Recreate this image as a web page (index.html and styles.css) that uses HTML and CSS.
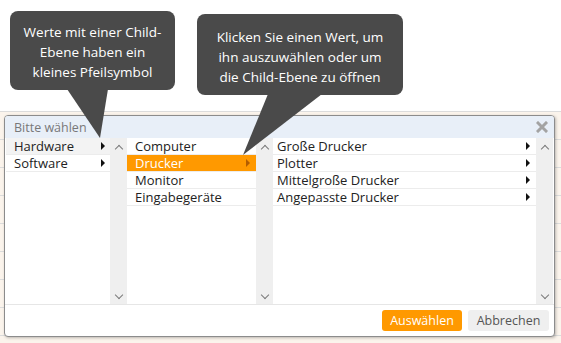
FILE: index.html
```html
<!DOCTYPE html>
<html>
<head>
<meta charset="UTF-8">
<link rel="stylesheet" href="styles.css">
</head>
<body>
<div class="page">
    <div class="top"></div>
    <div class="backdrop">
        <div class="dialog">
            <div class="dialog-head">
                <span class="dialog-title">Bitte wählen</span>
                <svg class="close" width="12" height="12" viewBox="0 0 12 12">
                    <path d="M2 2 L10 10 M10 2 L2 10" stroke="#a3a3a3" stroke-width="3" stroke-linecap="square"/>
                </svg>
            </div>
            <div class="dialog-body">
                <div class="list col1">
                    <div class="item hover">Hardware<span class="tri"></span></div>
                    <div class="item">Software<span class="tri"></span></div>
                </div>
                <div class="scroll"><span class="chev up"></span><span class="chev down"></span></div>
                <div class="list col2">
                    <div class="item">Computer</div>
                    <div class="item selected">Drucker<span class="tri"></span></div>
                    <div class="item">Monitor</div>
                    <div class="item">Eingabegeräte</div>
                </div>
                <div class="scroll"><span class="chev up"></span><span class="chev down"></span></div>
                <div class="list col3">
                    <div class="item">Große Drucker<span class="tri"></span></div>
                    <div class="item">Plotter<span class="tri"></span></div>
                    <div class="item">Mittelgroße Drucker<span class="tri"></span></div>
                    <div class="item">Angepasste Drucker<span class="tri"></span></div>
                </div>
                <div class="scroll"><span class="chev up"></span><span class="chev down"></span></div>
            </div>
            <div class="dialog-foot">
                <button class="btn primary">Auswählen</button>
                <button class="btn">Abbrechen</button>
            </div>
        </div>
    </div>

    <!-- hint bubbles over the dialog -->
    <svg class="pointers" width="561" height="343">
        <polygon points="67,89 108,89 100,138" fill="#4a4a4a"/>
        <polygon points="268,94 322,94 243,155" fill="#4a4a4a"/>
    </svg>
    <div class="tip tip-one">Werte mit einer Child-<br>Ebene haben ein<br>kleines Pfeilsymbol</div>
    <div class="tip tip-two">Klicken Sie einen Wert, um<br>ihn auszuwählen oder um<br>die Child-Ebene zu öffnen</div>
</div>
</body>
</html>
```

FILE: styles.css
```css
body {
    margin: 0;
    font-family: 'Open Sans', 'Liberation Sans', sans-serif;
    font-size: 13px;
    color: #222;
    background: #fff;
}

.page {
    position: relative;
    width: 561px;
    height: 343px;
    display: flex;
    flex-direction: column;
    overflow: hidden;
}

.top {
    height: 111px;
    flex: 0 0 111px;
}

.backdrop {
    flex: 1;
    border-top: 1px solid #dcdcdc;
    background-color: #fbf4ec;
    background-image: repeating-linear-gradient(to bottom, transparent 0, transparent 27px, #dcdcdc 27px, #dcdcdc 28px);
    padding: 3px 0 0 4px;
}

.dialog {
    width: 549px;
    height: 220px;
    background: #fff;
    border: 1px solid #8c8c8c;
    border-radius: 4px;
    box-shadow: 1px 1px 3px rgba(0, 0, 0, 0.25);
    display: flex;
    flex-direction: column;
    overflow: hidden;
}

.dialog-head {
    height: 22px;
    flex: 0 0 22px;
    background: #e8eff8;
    display: flex;
    align-items: center;
    justify-content: space-between;
    padding: 0 6px 0 9px;
}

.dialog-title {
    color: #787878;
    font-size: 12.5px;
}

.close {
    margin-top: -1px;
}

.dialog-body {
    height: 166px;
    flex: 0 0 166px;
    display: flex;
    padding: 0 1px;
    border-bottom: 1px solid #e6e6e6;
}

.list {
    background: #fff;
}
.col1 { width: 104px; }
.col2 { width: 129px; }
.col3 { width: 263px; }

.item {
    height: 16px;
    line-height: 16px;
    border-bottom: 1px solid #ececec;
    padding-left: 8px;
    display: flex;
    align-items: center;
    justify-content: space-between;
    padding-right: 5px;
    white-space: nowrap;
}
.col2 .item { padding-right: 6px; }
.col3 .item { padding-left: 4px; padding-right: 6px; }

.item.hover {
    background: #f3f3f3;
}

.item.selected {
    background: #ff9900;
    color: #fff;
}

.tri {
    width: 0;
    height: 0;
    border-top: 4px solid transparent;
    border-bottom: 4px solid transparent;
    border-left: 4px solid #111;
}
.item.selected .tri {
    border-left-color: #b35d00;
}

.scroll {
    width: 17px;
    flex: 0 0 17px;
    background: #efefef;
    display: flex;
    flex-direction: column;
    justify-content: space-between;
    align-items: center;
    padding: 6px 0 4px;
    box-sizing: border-box;
}

.chev {
    width: 5px;
    height: 5px;
    border-left: 1.5px solid #7a7a7a;
    border-top: 1.5px solid #7a7a7a;
}
.chev.up {
    transform: rotate(45deg);
    margin-top: 2px;
}
.chev.down {
    transform: rotate(225deg);
    margin-bottom: 2px;
}

.dialog-foot {
    flex: 1;
    display: flex;
    justify-content: flex-end;
    align-items: center;
    gap: 6px;
    padding-right: 5px;
}

.btn {
    font-family: inherit;
    font-size: 12.5px;
    height: 21px;
    border: none;
    border-radius: 3px;
    background: #efefef;
    color: #555;
    width: 81px;
    padding: 0;
    margin-top: -1px;
}
.btn.primary {
    background: #ff9900;
    color: #fff;
    width: 80px;
}

.pointers {
    position: absolute;
    left: 0;
    top: 0;
    pointer-events: none;
}

.tip {
    position: absolute;
    background: #4a4a4a;
    color: #fff;
    border-radius: 8px;
    text-align: center;
    font-size: 13.5px;
    line-height: 20px;
    box-sizing: border-box;
}
.tip-one {
    left: 10px;
    top: 11px;
    width: 165px;
    height: 79px;
    padding-top: 11px;
}
.tip-two {
    left: 197px;
    top: 14px;
    width: 206px;
    height: 81px;
    padding-top: 13px;
}
```
